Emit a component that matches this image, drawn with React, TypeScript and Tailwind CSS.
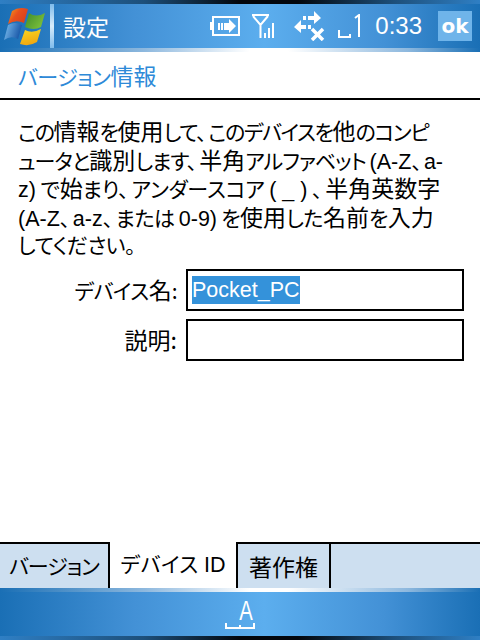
import type { ReactNode } from 'react'

const FONT = `font-["Noto_Sans_CJK_JP","Liberation_Sans",sans-serif] [font-feature-settings:'palt']`
const BAR = 'bg-[linear-gradient(90deg,#1a6fb5_0%,#4391d6_28%,#5caeee_55%,#4391d6_80%,#1a6fb5_100%)]'
const EDGE = 'h-[4px] bg-[linear-gradient(90deg,#2f7fc4_0%,#1d4f7a_30%,#02060c_50%,#02060c_62%,#1d4f7a_82%,#2f7fc4_100%)]'

function WinLogo() {
  return (
    <svg width="42" height="40" viewBox="0 0 42 40">
      <defs>
        <linearGradient id="r" x1="0" y1="0" x2="1" y2="0.6">
          <stop offset="0" stopColor="#f7a21c" />
          <stop offset="0.5" stopColor="#e8501c" />
          <stop offset="1" stopColor="#d8401c" />
        </linearGradient>
        <linearGradient id="g" x1="0" y1="0" x2="1" y2="0.6">
          <stop offset="0" stopColor="#3d8a2a" />
          <stop offset="1" stopColor="#7cc03a" />
        </linearGradient>
        <linearGradient id="b" x1="0" y1="0" x2="1" y2="0.3">
          <stop offset="0" stopColor="#7cc0f0" />
          <stop offset="1" stopColor="#1a58a8" />
        </linearGradient>
        <linearGradient id="y" x1="0" y1="0" x2="0.3" y2="1">
          <stop offset="0" stopColor="#f8d820" />
          <stop offset="1" stopColor="#f0a810" />
        </linearGradient>
      </defs>
      <path d="M8 5 Q15 0 24 3 L20 17 Q12 13 4 18 Z" fill="url(#r)" />
      <path d="M25 7 Q32 12 41 7 L37 21 Q30 25 21 21 Z" fill="url(#g)" />
      <path d="M4 19 Q11 15 18 19 L14 33 Q7 29 0 34 Z" fill="url(#b)" />
      <path d="M21 24 Q28 28 37 23 L33 36 Q25 41 16 38 Z" fill="url(#y)" />
    </svg>
  )
}

function BatteryIcon() {
  return (
    <svg width="30" height="20" viewBox="0 0 30 20" fill="none">
      <rect x="3" y="1" width="26" height="18" stroke="white" strokeWidth="2" />
      <rect x="0" y="6" width="3" height="8" fill="white" />
      <rect x="8" y="7" width="2" height="7" fill="white" />
      <rect x="11" y="7" width="2" height="7" fill="white" />
      <path d="M14 7h5V3l7 7-7 7v-3h-5z" fill="white" />
    </svg>
  )
}

function SignalIcon() {
  return (
    <svg width="22" height="24" viewBox="0 0 22 24" fill="none">
      <path d="M0 1h17M1 2l7.500 9 7.500-9M8.500 9v15" stroke="white" strokeWidth="2" />
      <rect x="12" y="19" width="2" height="5" fill="white" />
      <rect x="16" y="14" width="2" height="10" fill="white" />
      <rect x="20" y="9" width="2" height="15" fill="white" />
    </svg>
  )
}

function SyncIcon() {
  return (
    <svg width="32" height="30" viewBox="0 0 32 30" fill="none">
      <path d="M9 5h3v4H9zM14 5h6V0l7 7-7 6V9h-6z" fill="white" />
      <path d="M12 12v4H7v4L0 14l7-7v5zM14 12h3v4h-3z" fill="white" transform="translate(0 2)" />
      <path d="M18 18l11 11M29 18L18 29" stroke="white" strokeWidth="3.500" />
    </svg>
  )
}

function VolumeIcon() {
  return (
    <svg width="24" height="24" viewBox="0 0 24 24" fill="none">
      <path d="M1 16v7h11v-3" stroke="white" strokeWidth="2" />
      <path d="M17 4l4-3v22" stroke="white" strokeWidth="2" />
    </svg>
  )
}

function KeyboardIcon() {
  return (
    <div className="flex flex-col items-center">
      <span className="ml-[12px] scale-x-75 text-[27px] leading-[23px] text-white font-['Liberation_Sans',sans-serif]">A</span>
      <svg width="30" height="6" viewBox="0 0 30 6" fill="none">
        <path d="M1 0v5h28V0M15 2v3" stroke="white" strokeWidth="2" />
      </svg>
    </div>
  )
}

function FadeLine() {
  return <div className="h-1 bg-[linear-gradient(90deg,#1a6fb5_0%,#8db8de_30%,#ffffff_52%,#ffffff_60%,#8db8de_85%,#1a6fb5_100%)]" />
}

function Tab({ children, active, width }: { children: ReactNode; active?: boolean; width: string }) {
  return (
    <div
      className={`${width} h-[46px] flex items-center justify-center border-r-2 border-black text-black ${
        active ? 'bg-white' : 'bg-[#cddff0] border-t-2'
      }`}
    >
      {children}
    </div>
  )
}

// the device font sets kana much narrower than kanji: base text is kana size, K is kanji size
function K({ children }: { children: ReactNode }) {
  return <span className="text-[23px] tracking-normal">{children}</span>
}

// Latin runs
function L({ children }: { children: ReactNode }) {
  return <span className="text-[21.5px] tracking-normal font-['Liberation_Sans',sans-serif]">{children}</span>
}

function C() {
  return <span className="pr-[3px]">、</span>
}

function Line({ children, tracking = 'tracking-[-0.5px]' }: { children: ReactNode; tracking?: string }) {
  return <span className={`block h-[28.5px] ${tracking}`}>{children}</span>
}

export default function App() {
  return (
    <div className={`w-[480px] h-[640px] flex flex-col bg-white overflow-hidden ${FONT}`}>
      <div className={EDGE} />
      <div className={`h-[44px] flex items-center ${BAR}`}>
        <div className="w-[50px] flex justify-center shrink-0">
          <WinLogo />
        </div>
        <div className="w-[4px] h-[44px] bg-[linear-gradient(180deg,#7fbcec,#d8ecfa,#7fbcec)] shrink-0" />
        <span className="ml-[9px] text-[23px] leading-none text-white">設定</span>
        <div className="ml-auto flex items-center">
          <BatteryIcon />
          <div className="ml-[12px]"><SignalIcon /></div>
          <div className="ml-[20px]"><SyncIcon /></div>
          <div className="ml-[12px]"><VolumeIcon /></div>
          <span className="ml-[13px] text-[24px] leading-none text-white font-['Liberation_Sans',sans-serif]">0:33</span>
          <div className="ml-[16px] mr-[8px] w-[34px] h-[30px] flex items-center justify-center bg-[#6fb4ea] text-white font-bold text-[20px] leading-none font-['DejaVu_Sans',sans-serif]">
            ok
          </div>
        </div>
      </div>
      <FadeLine />

      <div className="h-[48px] flex items-center pl-[18px] text-[21px] tracking-[-0.5px] text-[#2e8ad8] border-b-2 border-black">
        <span>バージョン<K>情報</K></span>
      </div>

      <div className="flex-1 flex flex-col">
        <p className="mt-[16px] pl-[18px] text-[21px] leading-[28.5px] text-black whitespace-nowrap">
          <Line tracking="tracking-[-1.4px]">この<K>情報</K>を<K>使用</K>して<C />このデバイスを<K>他</K>のコンピ</Line>
          <Line tracking="tracking-[-1px]">ュータと<K>識別</K>します<C /><K>半角</K>アルファベット <L>(A-Z</L><C /><L>a-</L></Line>
          <Line tracking="tracking-[-0.2px]"><L>z)</L> で<K>始</K>まり<C />アンダースコア <L>( _ )</L> <C /><K>半角英数字</K></Line>
          <Line><L>(A-Z</L><C /><L>a-z</L><C />または <L>0-9)</L> を<K>使用</K>した<K>名前</K>を<K>入力</K></Line>
          <Line>してください。</Line>
        </p>
        <div className="mt-[10px] flex items-center">
          <label className="w-[177px] text-right text-[21px] tracking-[-0.5px] text-black">デバイス<K>名</K>:</label>
          <div className="ml-[9px] w-[278px] h-[42px] border-2 border-black flex items-center px-[4px]">
            <span className="bg-[#3492da] text-white text-[21.5px] leading-[28px] font-['Liberation_Sans',sans-serif]">Pocket_PC</span>
          </div>
        </div>
        <div className="mt-[8px] flex items-center">
          <label className="w-[177px] text-right text-[23px] text-black">説明:</label>
          <div className="ml-[9px] w-[278px] h-[42px] border-2 border-black" />
        </div>
      </div>

      <div className="flex bg-[#cddff0]">
        <Tab width="w-[110px]"><span className="text-[21px] tracking-[-1px]">バージョン</span></Tab>
        <Tab active width="w-[128px]"><span className="text-[21px] tracking-[0.5px]">デバイス <L>ID</L></span></Tab>
        <Tab width="w-[93px]"><span className="text-[23px]">著作権</span></Tab>
        <div className="flex-1 border-t-2 border-black" />
      </div>
      <FadeLine />
      <div className={`h-[44px] flex items-center justify-center ${BAR}`}>
        <KeyboardIcon />
      </div>
      <div className={EDGE} />
    </div>
  )
}
